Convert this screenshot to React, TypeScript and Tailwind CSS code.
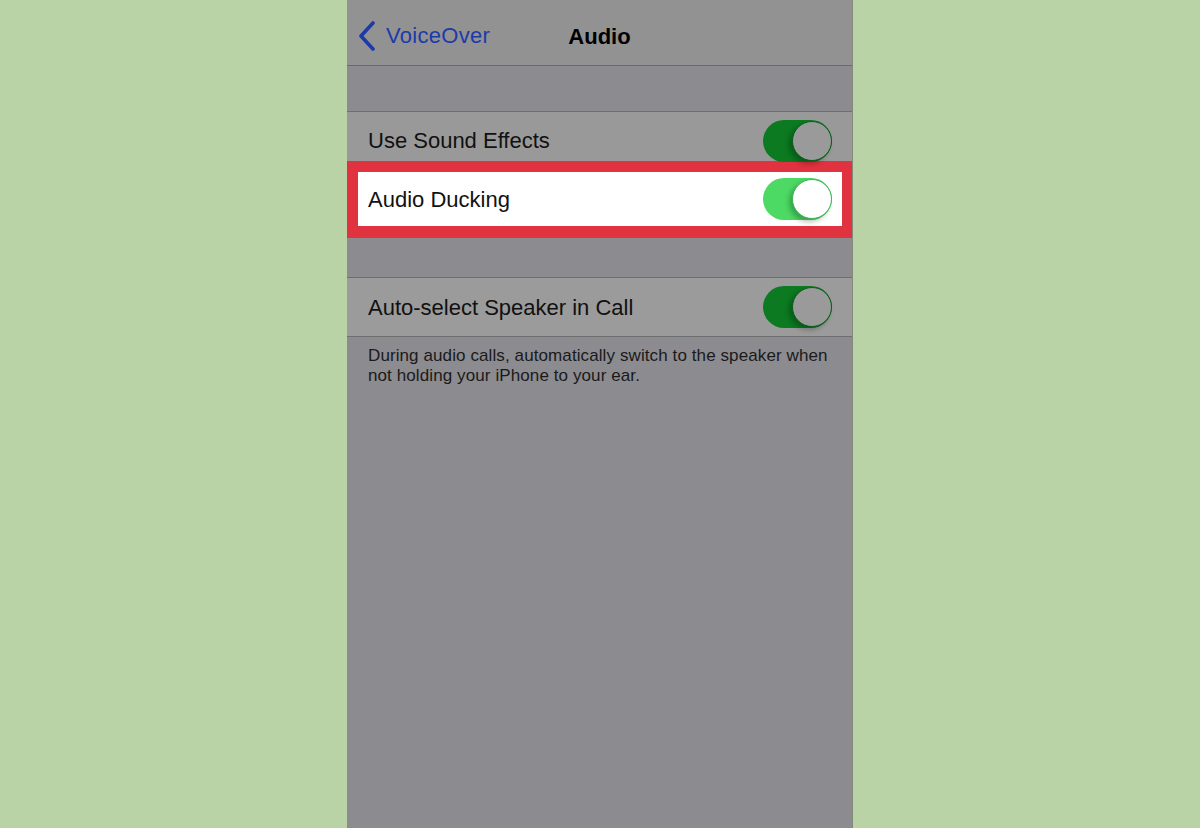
import React, { FC } from "react";

interface ToggleProps {
  lit?: boolean;
}

// iOS style switch, always in the "on" position here
const Toggle: FC<ToggleProps> = ({ lit }) => {
  return (
    <div
      className={`relative w-[69px] h-[42px] rounded-full shrink-0 ${
        lit ? "bg-[#4cd964]" : "bg-[#0b7a20]"
      }`}
    >
      <div
        className={`absolute right-0 top-[1px] w-[40px] h-[40px] rounded-full border-[1.5px] shadow-[-3px_3px_5px_rgba(0,0,0,0.25)] ${
          lit ? "bg-white border-[#3cb552]" : "bg-[#9a9a9a] border-[#0a5e19]"
        }`}
      />
    </div>
  );
};

const Chevron = () => (
  <svg width="18" height="30" viewBox="0 0 18 30" className="shrink-0">
    <path
      d="M15 2 L3 15 L15 28"
      fill="none"
      stroke="#1d3aa9"
      strokeWidth="3.6"
      strokeLinecap="round"
      strokeLinejoin="round"
    />
  </svg>
);

export default function App() {
  return (
    <div
      className="w-[1200px] h-[828px] bg-[#b9d3a6] flex justify-center overflow-hidden"
      style={{ fontFamily: '"Liberation Sans", Arial, sans-serif' }}
    >
      <div className="w-[506px] h-full bg-[#8c8b90] flex flex-col border-r border-[#7f8a78]">
        {/* nav bar */}
        <header className="relative h-[66px] bg-[#929293] border-b border-[#6b6b6b] flex items-center shrink-0">
          <div className="flex items-center pl-[11px] gap-[10px] pt-[6px]">
            <Chevron />
            <span className="text-[22px] text-[#1d3aa9] tracking-[0.3px]">VoiceOver</span>
          </div>
          <span className="absolute left-0 right-0 text-center pt-[7px] text-[22px] font-bold text-black">
            Audio
          </span>
        </header>

        <div className="h-[46px] shrink-0 border-b border-[#6f6f6f]" />

        <div className="h-[49px] pt-[8px] bg-[#999999] flex items-center justify-between pl-[21px] pr-[20px] shrink-0">
          <span className="text-[22px] text-[#111]">Use Sound Effects</span>
          <Toggle />
        </div>

        {/* highlighted row */}
        <div className="h-[77px] bg-[#e1323f] pt-[11px] pl-[11px] pr-[10px] pb-[12px] shrink-0">
          <div className="h-full bg-white flex items-center justify-between pl-[10px] pr-[10px]">
            <span className="text-[22px] text-[#111]">Audio Ducking</span>
            <Toggle lit />
          </div>
        </div>

        <div className="h-[40px] shrink-0 border-b border-[#6f6f6f]" />

        <div className="h-[59px] bg-[#9b9b9b] border-b border-[#6f6f6f] flex items-center justify-between pl-[21px] pr-[20px] shrink-0">
          <span className="text-[22px] text-[#111]">Auto-select Speaker in Call</span>
          <Toggle />
        </div>

        <p className="pl-[21px] pr-[10px] pt-[9px] text-[17px] leading-[20px] tracking-[0.1px] text-[#1a1a1a]">
          During audio calls, automatically switch to the speaker when not holding your iPhone to your ear.
        </p>
      </div>
    </div>
  );
}
